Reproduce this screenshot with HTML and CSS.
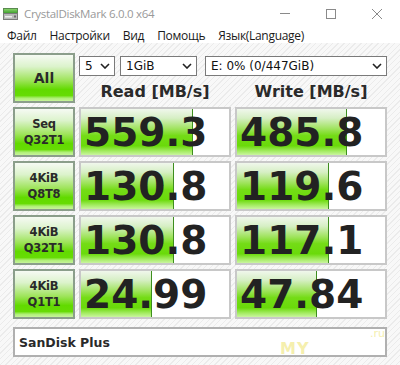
FILE: index.html
```html
<!DOCTYPE html>
<html>
<head>
<meta charset="utf-8">
<link rel="stylesheet" href="styles.css">
</head>
<body>
<div class="window">
  <div class="titlebar">
    <svg class="app-icon" width="15" height="12" viewBox="0 0 15 12">
      <defs>
        <linearGradient id="ig" x1="0" y1="0" x2="0" y2="1">
          <stop offset="0" stop-color="#8fd870"/>
          <stop offset="1" stop-color="#3a9a2a"/>
        </linearGradient>
      </defs>
      <rect x="0.5" y="0.5" width="14" height="5" fill="url(#ig)" stroke="#5a8a50"/>
      <rect x="0.5" y="5.5" width="14" height="6" fill="#b8b8b8" stroke="#7a7a7a"/>
      <rect x="2" y="8" width="7" height="1.5" fill="#eeeeee"/>
      <rect x="11" y="7.5" width="2" height="2" fill="#6a6a6a"/>
    </svg>
    <span class="title">CrystalDiskMark 6.0.0 x64</span>
    <div class="controls">
      <svg width="10" height="10" viewBox="0 0 10 10"><line x1="0" y1="4.5" x2="10" y2="4.5" stroke="#8a8a8a" stroke-width="1"/></svg>
      <svg width="10" height="10" viewBox="0 0 10 10"><rect x="0.5" y="0.5" width="9" height="9" fill="none" stroke="#8a8a8a" stroke-width="1"/></svg>
      <svg width="10" height="10" viewBox="0 0 10 10"><path d="M0 0 L10 10 M10 0 L0 10" stroke="#8a8a8a" stroke-width="1"/></svg>
    </div>
  </div>
  <div class="menubar">
    <span class="menu-item">Файл</span>
    <span class="menu-item">Настройки</span>
    <span class="menu-item">Вид</span>
    <span class="menu-item">Помощь</span>
    <span class="menu-item">Язык(Language)</span>
  </div>
  <div class="main">
    <div class="grid">
      <div class="btn btn-all">All</div>
      <div class="head">
        <div class="selects">
          <div class="select sel-count"><span>5</span><svg class="chev" width="10" height="6" viewBox="0 0 10 6"><path d="M1 1 L5 5 L9 1" fill="none" stroke="#222" stroke-width="1.6"/></svg></div>
          <div class="select sel-size"><span>1GiB</span><svg class="chev" width="10" height="6" viewBox="0 0 10 6"><path d="M1 1 L5 5 L9 1" fill="none" stroke="#222" stroke-width="1.6"/></svg></div>
          <div class="select sel-drive"><span>E: 0% (0/447GiB)</span><svg class="chev" width="10" height="6" viewBox="0 0 10 6"><path d="M1 1 L5 5 L9 1" fill="none" stroke="#222" stroke-width="1.6"/></svg></div>
        </div>
        <div class="labels">
          <span class="label">Read [MB/s]</span>
          <span class="label">Write [MB/s]</span>
        </div>
      </div>

      <div class="btn btn-test">Seq<br>Q32T1</div>
      <div class="cell"><div class="bar" style="width:112px"></div><span class="value">559.3</span></div>
      <div class="cell"><div class="bar" style="width:110px"></div><span class="value">485.8</span></div>

      <div class="btn btn-test">4KiB<br>Q8T8</div>
      <div class="cell"><div class="bar" style="width:93px"></div><span class="value">130.8</span></div>
      <div class="cell"><div class="bar" style="width:92px"></div><span class="value">119.6</span></div>

      <div class="btn btn-test">4KiB<br>Q32T1</div>
      <div class="cell"><div class="bar" style="width:93px"></div><span class="value">130.8</span></div>
      <div class="cell"><div class="bar" style="width:92px"></div><span class="value">117.1</span></div>

      <div class="btn btn-test">4KiB<br>Q1T1</div>
      <div class="cell"><div class="bar" style="width:71px"></div><span class="value">24.99</span></div>
      <div class="cell"><div class="bar" style="width:80px"></div><span class="value">47.84</span></div>
    </div>
    <div class="name">SanDisk Plus</div>
    <div class="watermark"><span class="wm-my">MY</span><span class="wm-ru">.ru</span></div>
  </div>
</div>
</body>
</html>
```
FILE: styles.css
```css
html, body {
  margin: 0;
  padding: 0;
}
body {
  width: 400px;
  height: 365px;
  overflow: hidden;
  background: #ffffff;
}
.window {
  width: 400px;
  height: 365px;
  display: flex;
  flex-direction: column;
}
.titlebar {
  height: 27px;
  display: flex;
  align-items: center;
  padding-left: 3px;
  background: #ffffff;
}
.app-icon {
  margin-top: 1px;
}
.title {
  margin-left: 6px;
  font-family: "Open Sans", "Noto Sans", sans-serif;
  font-size: 11.5px;
  color: #999999;
  letter-spacing: -0.3px;
}
.controls {
  margin-left: auto;
  display: flex;
  align-items: center;
  gap: 36px;
  padding-right: 18px;
}
.menubar {
  height: 16px;
  display: flex;
  align-items: center;
  padding-left: 7px;
  background: #ffffff;
  font-family: "Open Sans", "Noto Sans", sans-serif;
  font-size: 12px;
  color: #1a1a1a;
}
.menu-item {
  margin-right: 13px;
  letter-spacing: -0.3px;
}
.main {
  position: relative;
  flex: 1;
  padding: 10px 0 0 13px;
  background-color: #f6f6f6;
  background-image: repeating-linear-gradient(135deg, #f8f8f8 0px, #f8f8f8 3px, #ebebeb 3px, #ebebeb 4px);
}
.grid {
  display: grid;
  grid-template-columns: 62px 152px 152px;
  grid-auto-rows: 50px;
  column-gap: 4px;
  row-gap: 4px;
}
.btn {
  box-sizing: border-box;
  border: 2px solid #8b9e8b;
  background: linear-gradient(to bottom, #f6faf4 0%, #dcf3cc 25%, #9ee45a 55%, #62da00 75%, #66dc04 88%, #b0ef78 94%, #c6f49a 100%);
  display: flex;
  align-items: center;
  justify-content: center;
  text-align: center;
  font-family: "DejaVu Sans", sans-serif;
  font-weight: bold;
  color: #2a2a2a;
}
.btn-all {
  font-size: 14px;
}
.btn-test {
  font-size: 11.5px;
  line-height: 16px;
  letter-spacing: -0.2px;
}
.head {
  grid-column: 2 / 4;
  display: flex;
  flex-direction: column;
}
.selects {
  margin-top: 3px;
  display: flex;
  height: 20px;
}
.select {
  box-sizing: border-box;
  height: 20px;
  border: 1px solid #7a7a7a;
  background: #ffffff;
  display: flex;
  align-items: center;
  justify-content: space-between;
  padding: 0 4px 0 5px;
  font-family: "DejaVu Sans", sans-serif;
  font-size: 12px;
  color: #111111;
}
.sel-count { width: 36px; }
.sel-size { width: 77px; margin-left: 5px; }
.sel-drive { width: 182px; margin-left: 8px; }
.labels {
  display: grid;
  grid-template-columns: 152px 152px;
  column-gap: 4px;
  margin-top: 6px;
}
.label {
  text-align: center;
  font-family: "DejaVu Sans", sans-serif;
  font-weight: bold;
  font-size: 16px;
  color: #2a2a2a;
}
.cell {
  position: relative;
  box-sizing: border-box;
  border: 2px solid #c8c8c8;
  background: #ffffff;
  display: flex;
  align-items: center;
  overflow: hidden;
}
.bar {
  position: absolute;
  left: 0;
  top: 0;
  bottom: 0;
  box-sizing: border-box;
  border-right: 1px solid #3e8e1e;
  background: linear-gradient(to bottom, #f0f7ec 0%, #d6efc4 20%, #a2e462 42%, #74dc16 58%, #6ada0a 80%, #a6ec66 92%, #caf5a0 100%);
}
.value {
  position: relative;
  padding-left: 3px;
  font-family: "DejaVu Sans", sans-serif;
  font-weight: bold;
  font-size: 39px;
  color: #222222;
  line-height: 1;
}
.name {
  margin-top: 8px;
  box-sizing: border-box;
  width: 374px;
  height: 30px;
  border: 2px solid #b0b0b0;
  background: #ffffff;
  display: flex;
  align-items: center;
  padding-left: 4px;
  font-family: "DejaVu Sans", sans-serif;
  font-weight: bold;
  font-size: 12.5px;
  color: #2a2a2a;
}
.watermark {
  position: absolute;
  left: 280px;
  top: 284px;
  width: 110px;
  height: 30px;
  font-family: "DejaVu Sans", sans-serif;
  font-weight: bold;
  color: #f3ec9a;
  opacity: 0.8;
}
.wm-my {
  position: absolute;
  left: 0;
  top: 12px;
  font-size: 16px;
  letter-spacing: 1px;
}
.wm-ru {
  position: absolute;
  left: 90px;
  top: 0;
  font-size: 11px;
  font-weight: normal;
}
```
